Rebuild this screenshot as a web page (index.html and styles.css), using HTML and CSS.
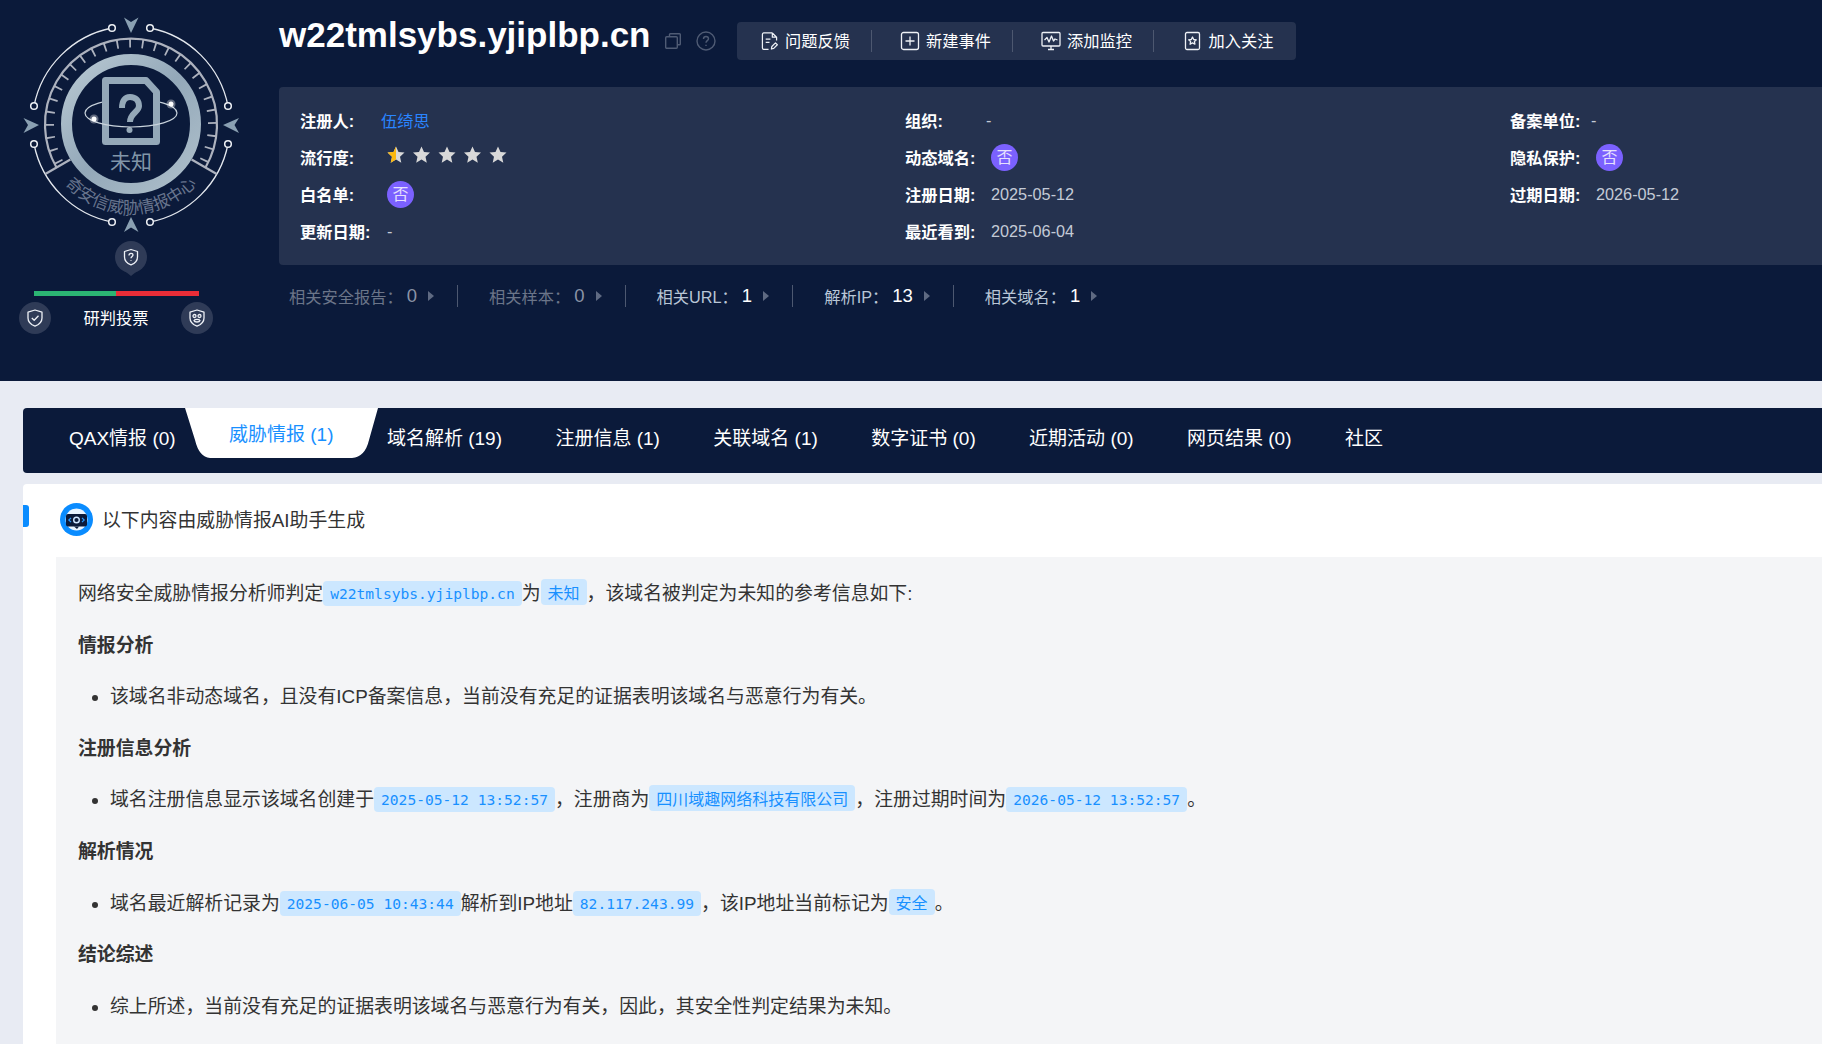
FILE: index.html
```html
<!DOCTYPE html>
<html lang="zh">
<head>
<meta charset="utf-8">
<title>w22tmlsybs.yjiplbp.cn</title>
<link rel="stylesheet" href="styles.css">
</head>
<body>
<header class="hero">
  <aside class="side">
    <svg class="seal" viewBox="0 0 262 241" width="262" height="241">
      <defs>
        <linearGradient id="ringGrad" x1="0" y1="0" x2="1" y2="1">
          <stop offset="0" stop-color="#b9c9d3"/><stop offset=".5" stop-color="#93a8b9"/><stop offset="1" stop-color="#afc0cb"/>
        </linearGradient>
        <path id="sealArc" d="M47.300 154.900A89 89 0 0 0 214.700 154.900"/>
      </defs>
      <g class="s-outer">
        <path d="M34 106A99 99 0 0 1 112 28"/>
        <path d="M150 28A99 99 0 0 1 228 106"/>
        <path d="M34 144A99 99 0 0 0 112 222"/>
        <path d="M150 222A99 99 0 0 0 228 144"/>
        <circle cx="112" cy="28" r="3.3"/><circle cx="150" cy="28" r="3.3"/>
        <circle cx="34" cy="106" r="3.3"/><circle cx="228" cy="106" r="3.3"/>
        <circle cx="34" cy="144" r="3.3"/><circle cx="228" cy="144" r="3.3"/>
        <circle cx="112" cy="222" r="3.3"/><circle cx="150" cy="222" r="3.3"/>
      </g>
      <g class="s-arrow">
        <path d="M124 17.500L131 22L138.500 17.500L131 33Z"/>
        <path d="M124 232L131 227.500L138.500 232L131 217Z"/>
        <path d="M23.500 118L28 125L23.500 133L39 125Z"/>
        <path d="M239 118L234.500 125L239 133L223 125Z"/>
      </g>
      <path class="s-ring" d="M56.500 167.500A86 86 0 1 1 205.500 167.500"/>
      <path class="s-ticks" d="M60.400 165.300A81.500 81.500 0 1 1 201.600 165.300"/>
      <path class="s-ring" d="M70.400 159.500L45.300 174M191.600 159.500L216.700 174"/>
      <circle class="s-thick" cx="131" cy="124" r="64.500"/>
      <path class="s-orbit" d="M85 113A46 14 0 0 1 177 113"/>
      <path class="s-doc" d="M105.500 80.500H146L156.500 92V141.500H105.500Z"/>
      <path class="s-q" d="M122 108C122 101 125 97 130 97C136 97 139 101 139 106C139 112 130 113 130 122"/>
      <circle class="s-qdot" cx="129.500" cy="130" r="3"/>
      <path class="s-orbit" d="M85 113A46 14 0 0 0 177 113"/>
      <circle class="s-glow" cx="94" cy="119" r="4.500"/><circle class="s-dot" cx="94" cy="119" r="2.500"/>
      <circle class="s-glow" cx="171" cy="104" r="4.500"/><circle class="s-dot" cx="171" cy="104" r="2.500"/>
      <text class="s-name" x="131" y="169" text-anchor="middle">未知</text>
      <text class="s-org"><textPath href="#sealArc" startOffset="50%" text-anchor="middle">奇安信威胁情报中心</textPath></text>
    </svg>
    <div class="pin">
      <svg viewBox="0 0 20 20" width="20" height="20"><path class="ic" d="M10 2.500L16.500 4.500V10C16.500 14 13.500 16.500 10 17.800C6.500 16.500 3.500 14 3.500 10V4.500Z"/><path class="ic" d="M8 8.500C8 7 9 6.300 10 6.300C11.200 6.300 12 7.100 12 8.100C12 9.400 10 9.600 10 11.200M10 13V13.800"/></svg>
    </div>
    <div class="vote-bar"><span class="vote-good"></span><span class="vote-bad"></span></div>
    <div class="vote-row">
      <span class="vote-btn">
        <svg viewBox="0 0 20 20" width="20" height="20"><path class="ic" d="M10 2L17 4.200V10C17 14.300 13.700 16.800 10 18.200C6.300 16.800 3 14.300 3 10V4.200Z"/><path class="ic" d="M6.800 10L9.200 12.300L13.500 7.800"/></svg>
      </span>
      <span class="vote-label">研判投票</span>
      <span class="vote-btn">
        <svg viewBox="0 0 20 20" width="20" height="20"><path class="ic" d="M10 2L17 4.200V10C17 14.300 13.700 16.800 10 18.200C6.300 16.800 3 14.300 3 10V4.200Z"/><circle class="ic" cx="7.500" cy="8" r="1.500"/><circle class="ic" cx="12.500" cy="8" r="1.500"/><path class="ic" d="M7 12.500C8 11 12 11 13 12.500C12.500 14.500 7.500 14.500 7 12.500Z"/></svg>
      </span>
    </div>
  </aside>
  <div class="main">
    <div class="title-row">
      <h1 class="title">w22tmlsybs.yjiplbp.cn</h1>
      <svg class="copy" viewBox="0 0 16 16" width="16" height="16"><path class="dim" d="M4.500 3.500V1.500C4.500 1 4.800 .7 5.300 .7H14.500C15 .7 15.300 1 15.300 1.500V11C15.300 11.500 15 11.800 14.500 11.800H12.300"/><rect class="dim" x=".7" y="3.700" width="11.600" height="11.600" rx="1"/></svg>
      <svg class="help" viewBox="0 0 20 20" width="20" height="20"><circle class="dim" cx="10" cy="10" r="9"/><path class="dim" d="M7.500 8C7.500 6.500 8.600 5.500 10 5.500C11.500 5.500 12.500 6.500 12.500 7.800C12.500 9.500 10 9.800 10 11.800M10 13.800V15"/></svg>
      <nav class="tools">
        <a class="tool tool-first">
          <svg viewBox="0 0 18 20" width="17" height="20"><path class="ic" d="M12 1.500H3C2 1.500 1.500 2 1.500 3V17.500C1.500 18.300 2 18.800 3 18.800H8M12 1.500L16.500 6V9.500M12 1.500V6H16.500"/><path class="ic" d="M5 8H10M5 11.500H9"/><path class="ic" d="M11 18.500L11.500 15.800L15.300 12L17.300 14L13.500 17.800Z"/></svg>
          <span class="tool-text">问题反馈</span>
        </a>
        <a class="tool">
          <svg viewBox="0 0 20 20" width="20" height="20"><rect class="ic" x="1.500" y="1.500" width="17" height="17" rx="2"/><path class="ic" d="M10 5.500V14.500M5.500 10H14.500"/></svg>
          <span class="tool-text">新建事件</span>
        </a>
        <a class="tool">
          <svg viewBox="0 0 20 20" width="20" height="20"><rect class="ic" x="1" y="1.500" width="18" height="13.500" rx="1"/><path class="ic" d="M3.500 9L6 6.500L8 11L10.500 5L12.500 10L14 8L16.500 9M7 18.500H13M10 15V18.500"/></svg>
          <span class="tool-text">添加监控</span>
        </a>
        <a class="tool tool-last">
          <svg viewBox="0 0 17 20" width="17" height="20"><rect class="ic" x="1.500" y="1.500" width="14" height="17" rx="1.500"/><path class="ic" d="M8.500 6L9.700 8.500L12.300 8.800L10.400 10.600L10.900 13.200L8.500 11.900L6.100 13.200L6.600 10.600L4.700 8.800L7.300 8.500Z"/></svg>
          <span class="tool-text">加入关注</span>
        </a>
      </nav>
    </div>
    <section class="info">
      <div class="cell"><span class="key key-s">注册人:</span><a class="link">伍绮思</a></div>
      <div class="cell"><span class="key">组织:</span><span class="val val-dash">-</span></div>
      <div class="cell"><span class="key">备案单位:</span><span class="val val-dash">-</span></div>

      <div class="cell"><span class="key key-s">流行度:</span>
        <svg class="stars" viewBox="0 0 120 18" width="120" height="18">
          <defs><path id="star" d="M0 -8.500L2.500 -2.900L8.500 -2.400L4 1.700L5.300 7.800L0 4.600L-5.300 7.800L-4 1.700L-8.500 -2.400L-2.500 -2.900Z"/></defs>
          <use href="#star" x="9" y="9" class="star"/><path class="star-on" d="M9 .5V13.600L3.700 16.800L5 10.700L.5 6.600L6.500 6.100Z"/>
          <use href="#star" x="34.500" y="9" class="star"/>
          <use href="#star" x="60" y="9" class="star"/>
          <use href="#star" x="85.500" y="9" class="star"/>
          <use href="#star" x="111" y="9" class="star"/>
        </svg>
      </div>
      <div class="cell"><span class="key">动态域名:</span><span class="badge">否</span></div>
      <div class="cell"><span class="key">隐私保护:</span><span class="badge">否</span></div>

      <div class="cell"><span class="key key-s">白名单:</span><span class="badge badge-s">否</span></div>
      <div class="cell"><span class="key">注册日期:</span><span class="val">2025-05-12</span></div>
      <div class="cell"><span class="key">过期日期:</span><span class="val">2026-05-12</span></div>

      <div class="cell"><span class="key key-s">更新日期:</span><span class="val val-first">-</span></div>
      <div class="cell"><span class="key">最近看到:</span><span class="val">2025-06-04</span></div>
      <div class="cell"></div>
    </section>
    <div class="stats">
      <div class="stat stat-off"><span class="stat-k">相关安全报告：</span><b class="stat-n">0</b><i class="arrow"></i></div>
      <div class="stat stat-off"><span class="stat-k">相关样本：</span><b class="stat-n">0</b><i class="arrow"></i></div>
      <div class="stat"><span class="stat-k">相关URL：</span><b class="stat-n">1</b><i class="arrow"></i></div>
      <div class="stat"><span class="stat-k">解析IP：</span><b class="stat-n">13</b><i class="arrow"></i></div>
      <div class="stat"><span class="stat-k">相关域名：</span><b class="stat-n">1</b><i class="arrow"></i></div>
    </div>
  </div>
</header>

<div class="page">
  <nav class="tabs">
    <a class="tab">QAX情报 (0)</a>
    <a class="tab tab-on">威胁情报 (1)</a>
    <a class="tab">域名解析 (19)</a>
    <a class="tab">注册信息 (1)</a>
    <a class="tab">关联域名 (1)</a>
    <a class="tab">数字证书 (0)</a>
    <a class="tab">近期活动 (0)</a>
    <a class="tab">网页结果 (0)</a>
    <a class="tab">社区</a>
  </nav>
  <main class="card">
    <div class="ai-row">
      <svg class="ai-icon" viewBox="0 0 33 33" width="33" height="33">
        <circle cx="16.500" cy="16.500" r="16.500" fill="#0a8cff"/>
        <circle cx="16.500" cy="16.500" r="11" fill="#e9f4ff"/>
        <rect x="6" y="11" width="21" height="12.500" rx="2" fill="#0b1a3a"/>
        <path d="M14 23.500L19 23.500L17 26Z" fill="#0b1a3a"/>
        <circle cx="16.500" cy="17" r="2.800" fill="none" stroke="#cfe6ff" stroke-width="1.400"/>
        <path d="M11 14.800L8.800 17L11 19.200M22 14.800L24.200 17L22 19.200" fill="none" stroke="#2a9bff" stroke-width="1.200"/>
      </svg>
      <span class="ai-text">以下内容由威胁情报AI助手生成</span>
    </div>
    <article class="report">
      <p>网络安全威胁情报分析师判定<code class="tag">w22tmlsybs.yjiplbp.cn</code>为<code class="tag tag-cn">未知</code>，该域名被判定为未知的参考信息如下:</p>
      <h4>情报分析</h4>
      <ul><li>该域名非动态域名，且没有ICP备案信息，当前没有充足的证据表明该域名与恶意行为有关。</li></ul>
      <h4>注册信息分析</h4>
      <ul><li>域名注册信息显示该域名创建于<code class="tag">2025-05-12 13:52:57</code>，注册商为<code class="tag tag-cn">四川域趣网络科技有限公司</code>，注册过期时间为<code class="tag">2026-05-12 13:52:57</code>。</li></ul>
      <h4>解析情况</h4>
      <ul><li>域名最近解析记录为<code class="tag">2025-06-05 10:43:44</code>解析到IP地址<code class="tag">82.117.243.99</code>，该IP地址当前标记为<code class="tag tag-cn">安全</code>。</li></ul>
      <h4>结论综述</h4>
      <ul><li>综上所述，当前没有充足的证据表明该域名与恶意行为有关，因此，其安全性判定结果为未知。</li></ul>
    </article>
  </main>
</div>
</body>
</html>
```
FILE: styles.css
```css
* { box-sizing: border-box; }
html, body { margin: 0; height: 1044px; overflow: hidden; }
body {
  background: #e8ebf3;
  font-family: "Liberation Sans", "Noto Sans CJK SC", sans-serif;
  color: #333;
}

.hero { display: flex; height: 381px; background: #0b1a3a; }
.side { flex: 0 0 279px; display: flex; flex-direction: column; }
.seal { display: block; }
.s-outer path { fill: none; stroke: #e4e8ee; stroke-width: 1.3; }
.s-outer circle { fill: #0b1a3a; stroke: #eef1f5; stroke-width: 1.5; }
.s-arrow path { fill: #8aa0b2; }
.s-ring { fill: none; stroke: #adb2be; stroke-width: 2.2; }
.s-ticks { fill: none; stroke: #adb2be; stroke-width: 9; stroke-dasharray: 1.800 10.920; stroke-dashoffset: -3.300; }
.s-thick { fill: none; stroke: url(#ringGrad); stroke-width: 11; }
.s-orbit { fill: none; stroke: #c9d3dc; stroke-width: 1.200; }
.s-doc { fill: #0b1a3a; stroke: #94a8b8; stroke-width: 7; stroke-linejoin: round; }
.s-q { fill: none; stroke: #94a8b8; stroke-width: 6; }
.s-qdot { fill: #94a8b8; }
.s-glow { fill: #fff; opacity: .35; }
.s-dot { fill: #fff; }
.s-name { fill: #8196a8; font-size: 21px; font-family: "Noto Sans CJK SC", sans-serif; }
.s-org { fill: #68758e; font-size: 16.500px; font-family: "Noto Sans CJK SC", sans-serif; }

.ic { fill: none; stroke: #eef1f6; stroke-width: 1.300; stroke-linejoin: round; }
.dim { fill: none; stroke: #4f5b74; stroke-width: 1.400; }

.pin {
  position: relative;
  width: 32px; height: 32px;
  margin-left: 115px;
  border-radius: 50%;
  background: #2f3b57;
  display: flex; align-items: center; justify-content: center;
}
.pin::after {
  content: ""; position: absolute; left: 11px; bottom: -3px;
  width: 10px; height: 10px; background: #2f3b57;
  clip-path: polygon(0 60%, 100% 60%, 50% 100%);
}
.vote-bar { display: flex; width: 165px; height: 5px; margin: 18px 0 0 34px; }
.vote-good { width: 82px; background: #2cb573; }
.vote-bad { flex: 1; background: #ea2d37; }
.vote-row {
  display: flex; align-items: center; justify-content: space-between;
  width: 194px; margin: 6px 0 0 19px;
}
.vote-btn {
  width: 32px; height: 32px; border-radius: 50%; background: #2f3b57;
  display: flex; align-items: center; justify-content: center;
}
.vote-label { color: #fff; font-size: 16.250px; line-height: 32px; }

.main { flex: 1; min-width: 0; padding-top: 22px; }
.title-row { display: flex; align-items: center; height: 38px; }
.title {
  margin: 0 14px 12px 0;
  font-size: 35px; font-weight: 700; line-height: 38px; color: #fff;
}
.copy { flex: none; margin-right: 15px; }
.help { flex: none; margin-right: 21px; }
.tools {
  display: flex; align-items: center;
  width: 559px; height: 38px;
  background: #25324f; border-radius: 4px;
}
.tool {
  flex: 0 0 141px; height: 100%;
  position: relative;
  display: flex; align-items: center; justify-content: center; gap: 6px;
  padding-left: 7px;
  color: #fff; font-size: 16.250px;
}
.tool-first { flex-basis: 135px; padding-left: 3px; gap: 7px; }
.tool-last { gap: 8px; padding-left: 9px; }
.tool-text { padding-bottom: 2px; }
.tool:not(:last-child)::after {
  content: ""; position: absolute; right: 0; top: 8px; bottom: 8px;
  width: 1px; background: #4d5870;
}
.tool svg { flex: none; }

.info {
  display: grid;
  grid-template-columns: 605px 605px 1fr;
  grid-auto-rows: 37px;
  height: 178px;
  margin-top: 27px;
  padding: 15px 0 15px 21px;
  background: #25324f;
  border-radius: 4px 0 0 4px;
}
.cell { display: flex; align-items: center; }
.key {
  flex: 0 0 86px;
  padding-bottom: 2px;
  color: #fff; font-size: 16.250px; font-weight: 700;
}
.key-s { flex-basis: 81px; }
.val { color: #c3cad6; font-size: 16.250px; }
.val-dash { margin-left: -5px; }
.val-first { margin-left: 6px; }
.link { padding-bottom: 2px; color: #2a85ff; font-size: 16.250px; }
.badge {
  width: 27px; height: 27px;
  border-radius: 50%; background: #7b61ff;
  color: #e6e0fd; font-size: 16px; line-height: 27px; text-align: center;
}
.badge-s { margin-left: 6px; }
.stars { margin: 0 0 6px 6px; }
.star { fill: #d9d9d9; }
.star-on { fill: #fbb80f; }

.stats { display: flex; align-items: center; height: 30px; margin-top: 16px; padding-left: 10px; }
.stat {
  display: flex; align-items: center;
  height: 22px; padding-right: 23px; margin-right: 31px;
  border-right: 1px solid #4d5870;
  font-size: 16.250px; color: #b9c6d6;
}
.stat:last-child { border-right: 0; }
.stat-n { font-weight: 400; font-size: 18.500px; color: #fff; margin-right: 11px; }
.stat-off .stat-k { color: #6b7589; }
.stat-off .stat-n { color: #8a93a6; }
.stat-k { white-space: nowrap; margin-right: 4px; }
.arrow {
  width: 0; height: 0;
  border-left: 6px solid #5f6a82;
  border-top: 5.500px solid transparent;
  border-bottom: 5.500px solid transparent;
}

.page { padding: 27px 0 0 23px; }
.tabs {
  position: relative; z-index: 0;
  display: flex; gap: 53.400px;
  height: 65px; padding-left: 46px;
  background: #0b1a3a; border-radius: 4px 0 0 4px;
}
.tab {
  display: flex; align-items: center;
  padding-bottom: 9px;
  color: #fff; font-size: 19px; white-space: nowrap; position: relative;
}
.tab-on { color: #1890ff; padding-bottom: 16px; }
.tab-on::before {
  content: ""; position: absolute; left: -44px; top: 0;
  width: 193px; height: 50px; background: #fff; z-index: -1;
  clip-path: path("M0 0L10 32Q14 49 25 50H167Q180 49 184 32L193 0Z");
}

.card { margin-top: 11px; padding-top: 19px; background: #fff; border-radius: 4px 0 0 0; position: relative; }
.card::before {
  content: ""; position: absolute; left: 0; top: 21px;
  width: 6px; height: 22px; background: #0a8cff; border-radius: 0 3px 3px 0;
}
.ai-row {
  display: flex; align-items: center; gap: 9px;
  height: 32px; margin-left: 37px;
  font-size: 18.860px; color: #333;
}
.ai-text { padding-bottom: 2px; }
.ai-icon { flex: none; }
.report {
  margin: 22px 0 0 33px;
  padding: 22px 22px 2px;
  background: #f4f5f7;
  font-size: 18.860px; line-height: 30px; color: #333;
}
.report p, .report h4, .report ul { margin: 0 0 21.600px; }
.report h4 { font-size: 18.860px; font-weight: 700; }
.report ul { padding-left: 32px; }
.tag {
  padding: 4px 7px;
  background: #cce7ff; color: #1890ff;
  border-radius: 4px;
  font-family: "DejaVu Sans Mono", monospace;
  font-size: 14.600px;
  line-height: 1;
  vertical-align: 1px;
}
.tag-cn { font-family: "Noto Sans CJK SC", sans-serif; font-size: 16px; padding: 1px 7px; }
```
